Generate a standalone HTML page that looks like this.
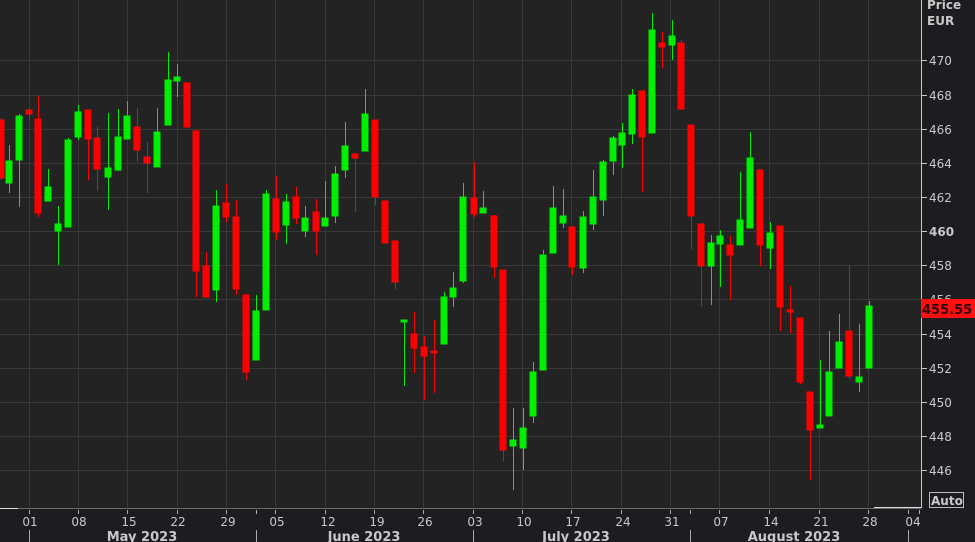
<!DOCTYPE html>
<html><head><meta charset="utf-8"><style>
html,body{margin:0;padding:0;background:#1d1c20;width:975px;height:542px;overflow:hidden}
svg{display:block}
text{font-family:"DejaVu Sans","Liberation Sans",sans-serif}
.t{fill:#c8c8c8}
.pl{fill:#300000}
</style></head><body>
<svg width="975" height="542" viewBox="0 0 975 542" xmlns="http://www.w3.org/2000/svg">
<rect x="0" y="0" width="921" height="508" fill="#232323"/>
<g stroke="#383838" stroke-width="1">
<line x1="0" y1="60.5" x2="921" y2="60.5"/><line x1="0" y1="95.5" x2="921" y2="95.5"/><line x1="0" y1="129.5" x2="921" y2="129.5"/><line x1="0" y1="163.5" x2="921" y2="163.5"/><line x1="0" y1="197.5" x2="921" y2="197.5"/><line x1="0" y1="231.5" x2="921" y2="231.5"/><line x1="0" y1="265.5" x2="921" y2="265.5"/><line x1="0" y1="299.5" x2="921" y2="299.5"/><line x1="0" y1="334.5" x2="921" y2="334.5"/><line x1="0" y1="368.5" x2="921" y2="368.5"/><line x1="0" y1="402.5" x2="921" y2="402.5"/><line x1="0" y1="436.5" x2="921" y2="436.5"/><line x1="0" y1="470.5" x2="921" y2="470.5"/>
<line x1="29.5" y1="0" x2="29.5" y2="508"/><line x1="78.5" y1="0" x2="78.5" y2="508"/><line x1="127.5" y1="0" x2="127.5" y2="508"/><line x1="177.5" y1="0" x2="177.5" y2="508"/><line x1="226.5" y1="0" x2="226.5" y2="508"/><line x1="275.5" y1="0" x2="275.5" y2="508"/><line x1="325.5" y1="0" x2="325.5" y2="508"/><line x1="374.5" y1="0" x2="374.5" y2="508"/><line x1="423.5" y1="0" x2="423.5" y2="508"/><line x1="473.5" y1="0" x2="473.5" y2="508"/><line x1="522.5" y1="0" x2="522.5" y2="508"/><line x1="571.5" y1="0" x2="571.5" y2="508"/><line x1="621.5" y1="0" x2="621.5" y2="508"/><line x1="670.5" y1="0" x2="670.5" y2="508"/><line x1="719.5" y1="0" x2="719.5" y2="508"/><line x1="769.5" y1="0" x2="769.5" y2="508"/><line x1="819.5" y1="0" x2="819.5" y2="508"/><line x1="868.5" y1="0" x2="868.5" y2="508"/>
</g>
<g stroke="#00ee00" fill="#00ee00" stroke-width="1">
<line x1="9.5" y1="145" x2="9.5" y2="193"/><rect x="6" y="161" width="6" height="22"/>
<line x1="19.5" y1="114" x2="19.5" y2="207"/><rect x="16" y="116" width="6" height="44"/>
<line x1="48.5" y1="169" x2="48.5" y2="201"/><rect x="45" y="187" width="6" height="14"/>
<line x1="58.5" y1="206" x2="58.5" y2="265"/><rect x="55" y="224" width="6" height="7"/>
<line x1="68.5" y1="138" x2="68.5" y2="227"/><rect x="65" y="140" width="6" height="87"/>
<line x1="78.5" y1="105" x2="78.5" y2="140"/><rect x="75" y="112" width="6" height="25"/>
<line x1="108.5" y1="113" x2="108.5" y2="210"/><rect x="105" y="168" width="6" height="9"/>
<line x1="118.5" y1="109" x2="118.5" y2="171"/><rect x="115" y="137" width="6" height="33"/>
<line x1="127.5" y1="101" x2="127.5" y2="139"/><rect x="124" y="116" width="6" height="23"/>
<line x1="157.5" y1="108" x2="157.5" y2="167"/><rect x="154" y="132" width="6" height="35"/>
<line x1="168.5" y1="52" x2="168.5" y2="125"/><rect x="165" y="80" width="6" height="45"/>
<line x1="177.5" y1="64" x2="177.5" y2="97"/><rect x="174" y="77" width="6" height="4"/>
<line x1="216.5" y1="190" x2="216.5" y2="302"/><rect x="213" y="206" width="6" height="84"/>
<line x1="256.5" y1="295" x2="256.5" y2="360"/><rect x="253" y="311" width="6" height="49"/>
<line x1="266.5" y1="190" x2="266.5" y2="310"/><rect x="263" y="194" width="6" height="116"/>
<line x1="286.5" y1="194" x2="286.5" y2="244"/><rect x="283" y="202" width="6" height="23"/>
<line x1="305.5" y1="206" x2="305.5" y2="237"/><rect x="302" y="218" width="6" height="13"/>
<line x1="325.5" y1="181" x2="325.5" y2="226"/><rect x="322" y="218" width="6" height="8"/>
<line x1="335.5" y1="166" x2="335.5" y2="223"/><rect x="332" y="174" width="6" height="42"/>
<line x1="345.5" y1="122" x2="345.5" y2="178"/><rect x="342" y="146" width="6" height="24"/>
<line x1="365.5" y1="89" x2="365.5" y2="151"/><rect x="362" y="114" width="6" height="37"/>
<line x1="404.5" y1="321" x2="404.5" y2="386"/><rect x="401" y="320" width="6" height="2"/>
<line x1="444.5" y1="292" x2="444.5" y2="344"/><rect x="441" y="297" width="6" height="47"/>
<line x1="453.5" y1="272" x2="453.5" y2="307"/><rect x="450" y="288" width="6" height="9"/>
<line x1="463.5" y1="183" x2="463.5" y2="283"/><rect x="460" y="197" width="6" height="84"/>
<line x1="483.5" y1="191" x2="483.5" y2="213"/><rect x="480" y="208" width="6" height="5"/>
<line x1="513.5" y1="408" x2="513.5" y2="490"/><rect x="510" y="440" width="6" height="6"/>
<line x1="523.5" y1="408" x2="523.5" y2="470"/><rect x="520" y="428" width="6" height="20"/>
<line x1="533.5" y1="362" x2="533.5" y2="423"/><rect x="530" y="372" width="6" height="44"/>
<line x1="543.5" y1="250" x2="543.5" y2="370"/><rect x="540" y="255" width="6" height="115"/>
<line x1="553.5" y1="186" x2="553.5" y2="253"/><rect x="550" y="208" width="6" height="45"/>
<line x1="563.5" y1="189" x2="563.5" y2="228"/><rect x="560" y="216" width="6" height="7"/>
<line x1="583.5" y1="211" x2="583.5" y2="273"/><rect x="580" y="217" width="6" height="51"/>
<line x1="593.5" y1="170" x2="593.5" y2="230"/><rect x="590" y="197" width="6" height="27"/>
<line x1="603.5" y1="160" x2="603.5" y2="216"/><rect x="600" y="162" width="6" height="38"/>
<line x1="613.5" y1="136" x2="613.5" y2="175"/><rect x="610" y="138" width="6" height="23"/>
<line x1="622.5" y1="123" x2="622.5" y2="168"/><rect x="619" y="133" width="6" height="12"/>
<line x1="632.5" y1="89" x2="632.5" y2="144"/><rect x="629" y="95" width="6" height="39"/>
<line x1="652.5" y1="13" x2="652.5" y2="133"/><rect x="649" y="30" width="6" height="103"/>
<line x1="672.5" y1="20" x2="672.5" y2="60"/><rect x="669" y="36" width="6" height="9"/>
<line x1="711.5" y1="235" x2="711.5" y2="305"/><rect x="708" y="243" width="6" height="23"/>
<line x1="720.5" y1="230" x2="720.5" y2="287"/><rect x="717" y="236" width="6" height="8"/>
<line x1="740.5" y1="172" x2="740.5" y2="245"/><rect x="737" y="220" width="6" height="25"/>
<line x1="750.5" y1="132" x2="750.5" y2="228"/><rect x="747" y="158" width="6" height="70"/>
<line x1="770.5" y1="222" x2="770.5" y2="269"/><rect x="767" y="233" width="6" height="15"/>
<line x1="820.5" y1="360" x2="820.5" y2="428"/><rect x="817" y="425" width="6" height="3"/>
<line x1="829.5" y1="331" x2="829.5" y2="416"/><rect x="826" y="372" width="6" height="44"/>
<line x1="839.5" y1="314" x2="839.5" y2="368"/><rect x="836" y="342" width="6" height="26"/>
<line x1="859.5" y1="324" x2="859.5" y2="392"/><rect x="856" y="377" width="6" height="5"/>
<line x1="869.5" y1="301" x2="869.5" y2="368"/><rect x="866" y="306" width="6" height="62"/>
</g>
<g stroke="#ff0000" fill="#ff0000" stroke-width="1">
<line x1="1.5" y1="118" x2="1.5" y2="180"/><rect x="-2" y="120" width="6" height="58"/>
<line x1="29.5" y1="107" x2="29.5" y2="120"/><rect x="26" y="110" width="6" height="4"/>
<line x1="38.5" y1="96" x2="38.5" y2="217"/><rect x="35" y="119" width="6" height="94"/>
<line x1="88.5" y1="110" x2="88.5" y2="180"/><rect x="85" y="110" width="6" height="29"/>
<line x1="97.5" y1="127" x2="97.5" y2="191"/><rect x="94" y="138" width="6" height="31"/>
<line x1="137.5" y1="108" x2="137.5" y2="162"/><rect x="134" y="127" width="6" height="23"/>
<line x1="147.5" y1="142" x2="147.5" y2="193"/><rect x="144" y="157" width="6" height="6"/>
<line x1="187.5" y1="82" x2="187.5" y2="128"/><rect x="184" y="83" width="6" height="44"/>
<line x1="196.5" y1="130" x2="196.5" y2="297"/><rect x="193" y="131" width="6" height="140"/>
<line x1="206.5" y1="252" x2="206.5" y2="297"/><rect x="203" y="266" width="6" height="31"/>
<line x1="226.5" y1="184" x2="226.5" y2="222"/><rect x="223" y="203" width="6" height="14"/>
<line x1="236.5" y1="200" x2="236.5" y2="295"/><rect x="233" y="217" width="6" height="72"/>
<line x1="246.5" y1="294" x2="246.5" y2="380"/><rect x="243" y="295" width="6" height="77"/>
<line x1="276.5" y1="176" x2="276.5" y2="240"/><rect x="273" y="199" width="6" height="33"/>
<line x1="296.5" y1="187" x2="296.5" y2="224"/><rect x="293" y="197" width="6" height="21"/>
<line x1="316.5" y1="199" x2="316.5" y2="255"/><rect x="313" y="212" width="6" height="19"/>
<line x1="355.5" y1="155" x2="355.5" y2="212"/><rect x="352" y="154" width="6" height="4"/>
<line x1="375.5" y1="120" x2="375.5" y2="205"/><rect x="372" y="120" width="6" height="77"/>
<line x1="385.5" y1="200" x2="385.5" y2="243"/><rect x="382" y="201" width="6" height="42"/>
<line x1="395.5" y1="240" x2="395.5" y2="289"/><rect x="392" y="241" width="6" height="41"/>
<line x1="414.5" y1="312" x2="414.5" y2="373"/><rect x="411" y="334" width="6" height="14"/>
<line x1="424.5" y1="336" x2="424.5" y2="400"/><rect x="421" y="347" width="6" height="9"/>
<line x1="434.5" y1="320" x2="434.5" y2="393"/><rect x="431" y="351" width="6" height="2"/>
<line x1="474.5" y1="162" x2="474.5" y2="217"/><rect x="471" y="198" width="6" height="16"/>
<line x1="494.5" y1="215" x2="494.5" y2="278"/><rect x="491" y="216" width="6" height="51"/>
<line x1="503.5" y1="270" x2="503.5" y2="462"/><rect x="500" y="270" width="6" height="180"/>
<line x1="572.5" y1="227" x2="572.5" y2="275"/><rect x="569" y="227" width="6" height="40"/>
<line x1="642.5" y1="91" x2="642.5" y2="192"/><rect x="639" y="91" width="6" height="46"/>
<line x1="662.5" y1="32" x2="662.5" y2="68"/><rect x="659" y="43" width="6" height="4"/>
<line x1="681.5" y1="40" x2="681.5" y2="110"/><rect x="678" y="43" width="6" height="66"/>
<line x1="691.5" y1="125" x2="691.5" y2="249"/><rect x="688" y="125" width="6" height="91"/>
<line x1="701.5" y1="224" x2="701.5" y2="307"/><rect x="698" y="224" width="6" height="42"/>
<line x1="730.5" y1="236" x2="730.5" y2="300"/><rect x="727" y="245" width="6" height="10"/>
<line x1="760.5" y1="170" x2="760.5" y2="266"/><rect x="757" y="170" width="6" height="75"/>
<line x1="780.5" y1="226" x2="780.5" y2="331"/><rect x="777" y="226" width="6" height="81"/>
<line x1="790.5" y1="286" x2="790.5" y2="333"/><rect x="787" y="310" width="6" height="2"/>
<line x1="800.5" y1="318" x2="800.5" y2="384"/><rect x="797" y="318" width="6" height="64"/>
<line x1="810.5" y1="392" x2="810.5" y2="480"/><rect x="807" y="392" width="6" height="38"/>
<line x1="849.5" y1="265" x2="849.5" y2="379"/><rect x="846" y="331" width="6" height="45"/>
</g>
<line x1="921.5" y1="0" x2="921.5" y2="508" stroke="#c8c8c8"/>
<line x1="0" y1="508.5" x2="921" y2="508.5" stroke="#6a6a6a"/>
<line x1="0" y1="508.5" x2="18" y2="508.5" stroke="#ddd"/>
<line x1="874" y1="507.5" x2="921" y2="507.5" stroke="#ddd"/>
<g stroke="#c8c8c8">
<line x1="922" y1="60.5" x2="927" y2="60.5"/><line x1="922" y1="95.5" x2="927" y2="95.5"/><line x1="922" y1="129.5" x2="927" y2="129.5"/><line x1="922" y1="163.5" x2="927" y2="163.5"/><line x1="922" y1="197.5" x2="927" y2="197.5"/><line x1="922" y1="231.5" x2="927" y2="231.5"/><line x1="922" y1="265.5" x2="927" y2="265.5"/><line x1="922" y1="299.5" x2="927" y2="299.5"/><line x1="922" y1="334.5" x2="927" y2="334.5"/><line x1="922" y1="368.5" x2="927" y2="368.5"/><line x1="922" y1="402.5" x2="927" y2="402.5"/><line x1="922" y1="436.5" x2="927" y2="436.5"/><line x1="922" y1="470.5" x2="927" y2="470.5"/>
</g>
<g font-size="12" class="t">
<text class="t" x="929" y="65">470</text><text class="t" x="929" y="100">468</text><text class="t" x="929" y="134">466</text><text class="t" x="929" y="168">464</text><text class="t" x="929" y="202">462</text><text class="t" x="929" y="236" font-weight="bold">460</text><text class="t" x="929" y="270">458</text><text class="t" x="929" y="304">456</text><text class="t" x="929" y="339">454</text><text class="t" x="929" y="373">452</text><text class="t" x="929" y="407">450</text><text class="t" x="929" y="441">448</text><text class="t" x="929" y="475">446</text>
</g>
<rect x="921" y="299" width="54" height="19" fill="#ff1010"/>
<text class="pl" x="922" y="314" font-size="13" font-weight="bold">455.55</text>
<text class="t" x="927" y="9" font-size="12" font-weight="bold">Price</text>
<text class="t" x="927" y="25" font-size="12" font-weight="bold">EUR</text>
<rect x="929.5" y="492.5" width="34" height="15" fill="none" stroke="#bbb"/>
<text class="t" x="931" y="505" font-size="12" font-weight="bold">Auto</text>
<g stroke="#aaa">
<line x1="29.5" y1="510" x2="29.5" y2="514"/><line x1="78.5" y1="510" x2="78.5" y2="514"/><line x1="127.5" y1="510" x2="127.5" y2="514"/><line x1="177.5" y1="510" x2="177.5" y2="514"/><line x1="226.5" y1="510" x2="226.5" y2="514"/><line x1="256.5" y1="510" x2="256.5" y2="514"/><line x1="275.5" y1="510" x2="275.5" y2="514"/><line x1="325.5" y1="510" x2="325.5" y2="514"/><line x1="374.5" y1="510" x2="374.5" y2="514"/><line x1="423.5" y1="510" x2="423.5" y2="514"/><line x1="473.5" y1="510" x2="473.5" y2="514"/><line x1="522.5" y1="510" x2="522.5" y2="514"/><line x1="571.5" y1="510" x2="571.5" y2="514"/><line x1="621.5" y1="510" x2="621.5" y2="514"/><line x1="670.5" y1="510" x2="670.5" y2="514"/><line x1="690.5" y1="510" x2="690.5" y2="514"/><line x1="719.5" y1="510" x2="719.5" y2="514"/><line x1="769.5" y1="510" x2="769.5" y2="514"/><line x1="819.5" y1="510" x2="819.5" y2="514"/><line x1="868.5" y1="510" x2="868.5" y2="514"/><line x1="908.5" y1="510" x2="908.5" y2="514"/><line x1="919.5" y1="510" x2="919.5" y2="514"/>
<line x1="29.5" y1="530" x2="29.5" y2="542"/><line x1="256.5" y1="530" x2="256.5" y2="542"/><line x1="473.5" y1="530" x2="473.5" y2="542"/><line x1="690.5" y1="530" x2="690.5" y2="542"/><line x1="908.5" y1="530" x2="908.5" y2="542"/>
</g>
<g font-size="12" text-anchor="middle">
<text class="t" x="30" y="526">01</text><text class="t" x="79" y="526">08</text><text class="t" x="129" y="526">15</text><text class="t" x="178" y="526">22</text><text class="t" x="228" y="526">29</text><text class="t" x="277" y="526">05</text><text class="t" x="328" y="526">12</text><text class="t" x="377" y="526">19</text><text class="t" x="425" y="526">26</text><text class="t" x="475" y="526">03</text><text class="t" x="524" y="526">10</text><text class="t" x="573" y="526">17</text><text class="t" x="623" y="526">24</text><text class="t" x="672" y="526">31</text><text class="t" x="721" y="526">07</text><text class="t" x="771" y="526">14</text><text class="t" x="821" y="526">21</text><text class="t" x="870" y="526">28</text><text class="t" x="913" y="526">04</text>
</g>
<g font-size="13" font-weight="bold" text-anchor="middle">
<text class="t" x="142" y="541">May 2023</text><text class="t" x="364" y="541">June 2023</text><text class="t" x="576" y="541">July 2023</text><text class="t" x="794" y="541">August 2023</text>
</g>
</svg>
</body></html>
